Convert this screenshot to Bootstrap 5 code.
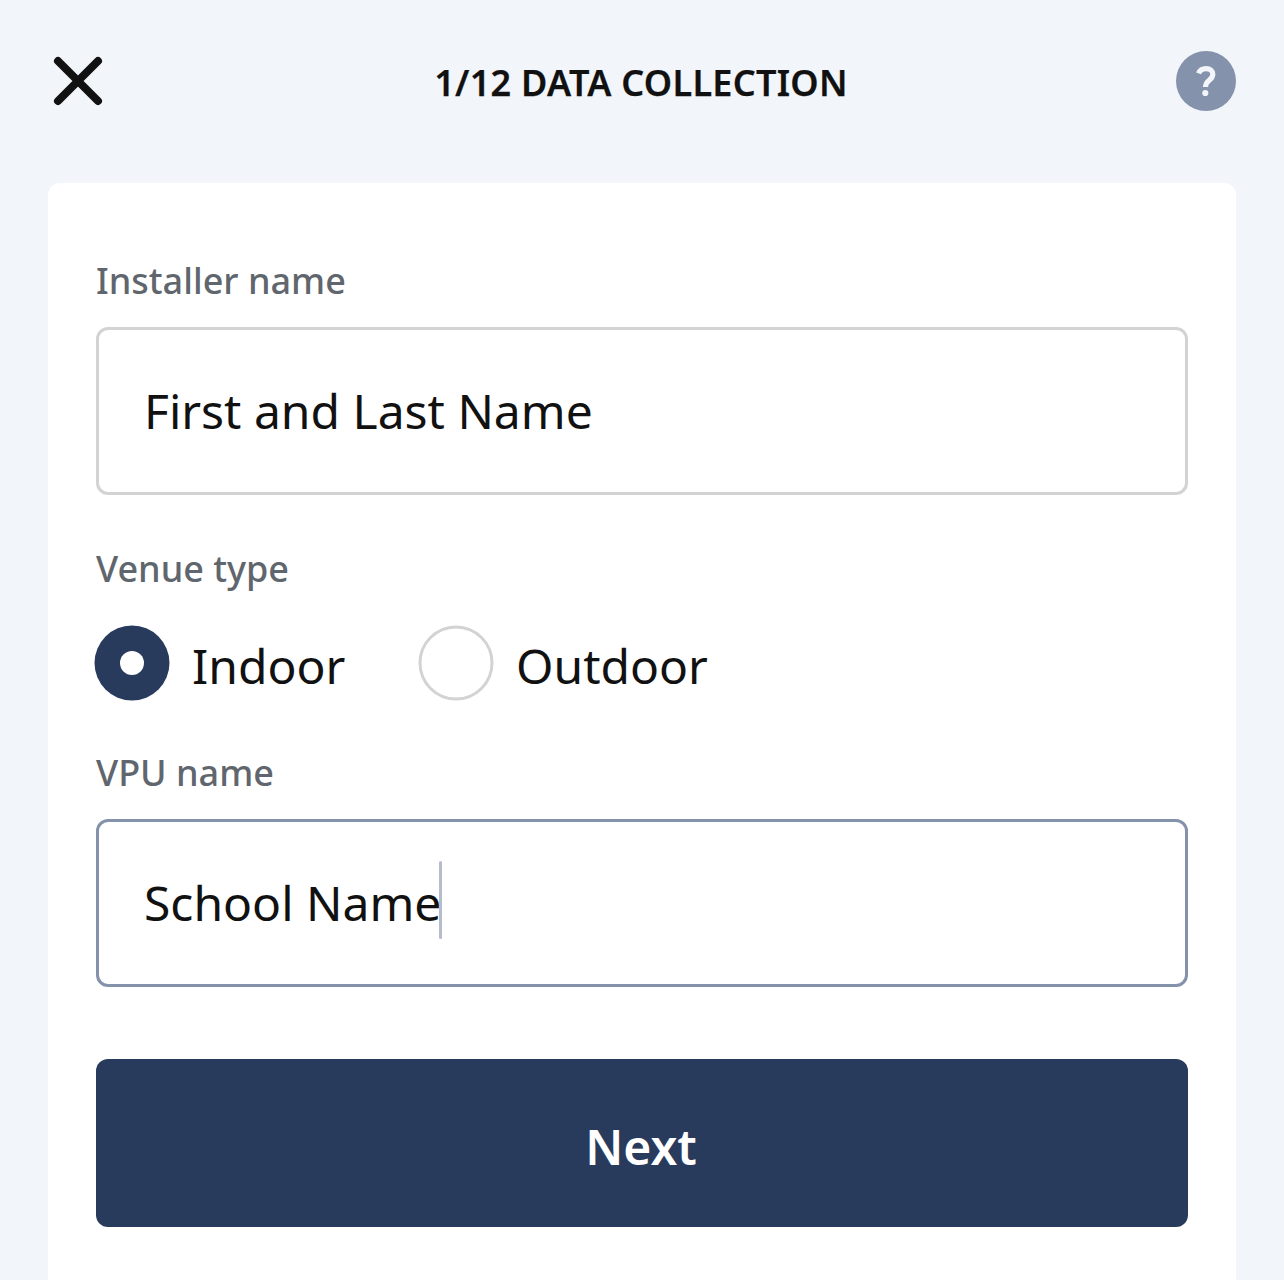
<!DOCTYPE html>
<html lang="en">
<head>
<meta charset="utf-8">
<meta name="viewport" content="width=device-width, initial-scale=1">
<title>Data collection</title>
<link href="https://cdn.jsdelivr.net/npm/bootstrap@5.3.0/dist/css/bootstrap.min.css" rel="stylesheet">
<style>
  body { font-family: "Noto Sans", sans-serif; background: #f2f5fa; color: #111; height: 1280px; overflow: hidden; }
  .app { height: 1280px; padding: 0 48px; }
  .topbar { height: 183px; padding-top: 51px; }
  .topbar .btn { width: 60px; height: 60px; }
  .topbar h1 { font-size: 36px; line-height: 60px; font-weight: 600; letter-spacing: .28px; -webkit-text-stroke: .25px #111; padding-top: 2px; margin-right: 2px; }
  .panel { border-radius: 12px 12px 0 0; padding: 74px 48px 0; }
  .form-label { font-size: 36px; line-height: 48px; font-weight: 500; color: #5f666d; margin-bottom: 22px; }
  .form-control, .form-control:focus { height: 168px; border: 3px solid #d3d3d3; border-radius: 12px; padding: 0 45px 2px; font-size: 48px; color: #111; box-shadow: none; }
  .form-control.is-active { border-color: #8592ab; }
  .caret { left: 343px; top: 42px; width: 3px; height: 78px; background: #b5bdcd; border-radius: 1.5px; }
  .field { margin-bottom: 50px; }
  .venue { margin-bottom: 50px; }
  .venue .form-label { margin-bottom: 34px; }
  .choice { gap: 24px; font-size: 48px; line-height: 72px; height: 72px; min-width: 324px; }
  .choice span { padding-top: 3px; }
  .btn-next { height: 168px; border-radius: 12px; background: #293b5c; color: #fff; font-size: 48px; font-weight: 600; margin-top: 72px; padding: 7px 2px 0 0; border: 0; }
</style>
</head>
<body>
<div class="app d-flex flex-column">
  <header class="topbar d-flex justify-content-between align-items-start">
    <button class="btn p-0 border-0 d-flex" aria-label="Close">
      <svg width="60" height="60" viewBox="0 0 60 60" fill="none" stroke="#111" stroke-width="8" stroke-linecap="round"><path d="M10 10 50 50M50 10 10 50"/></svg>
    </button>
    <h1 class="mb-0">1/12 DATA COLLECTION</h1>
    <button class="btn p-0 border-0 d-flex" aria-label="Help">
      <svg width="60" height="60" viewBox="0 0 60 60"><circle cx="30" cy="30" r="30" fill="#8592ab"/><path d="M22.6 22.4C23.8 19.2 26.5 17.6 30.1 17.6C34.3 17.6 36.8 19.9 36.8 23.3C36.8 26 35.3 27.7 33 29.5C30.4 31.5 29.6 33 29.6 36.1" fill="none" stroke="#f2f5fa" stroke-width="5.2"/><circle cx="29.3" cy="42" r="3.1" fill="#f2f5fa"/></svg>
    </button>
  </header>
  <main class="panel bg-white flex-grow-1">
    <form>
      <div class="field">
        <label class="form-label d-block" for="installer">Installer name</label>
        <input id="installer" class="form-control" type="text" value="First and Last Name">
      </div>
      <div class="venue">
        <div class="form-label">Venue type</div>
        <div class="d-flex" role="radiogroup">
          <div class="choice d-flex" role="radio" aria-checked="true">
            <svg class="overflow-visible" width="72" height="72"><circle cx="36" cy="36" r="37.5" fill="#293b5c"/><circle cx="36" cy="36" r="12" fill="#fff"/></svg>
            <span>Indoor</span>
          </div>
          <div class="choice d-flex" role="radio" aria-checked="false">
            <svg class="overflow-visible" width="72" height="72"><circle cx="36" cy="36" r="36" fill="#fff" stroke="#d3d3d3" stroke-width="3"/></svg>
            <span>Outdoor</span>
          </div>
        </div>
      </div>
      <div>
        <label class="form-label d-block" for="vpu">VPU name</label>
        <div class="position-relative">
          <input id="vpu" class="form-control is-active" type="text" value="School Name">
          <div class="caret position-absolute"></div>
        </div>
      </div>
      <button type="button" class="btn btn-next w-100">Next</button>
    </form>
  </main>
</div>
<script src="https://cdn.jsdelivr.net/npm/bootstrap@5.3.0/dist/js/bootstrap.bundle.min.js"></script>
</body>
</html>
